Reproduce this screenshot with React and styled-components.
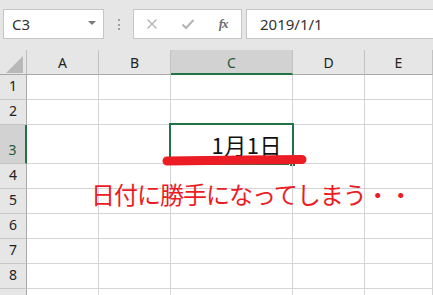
import React from 'react';
import styled, { createGlobalStyle } from 'styled-components';

const Global = createGlobalStyle`
  html, body { margin: 0; padding: 0; background: #fff; }
  body { font-family: "Noto Sans", "Noto Sans CJK JP", sans-serif; overflow: hidden; }
`;

const Page = styled.div`
  position: relative;
  width: 433px;
  height: 295px;
  overflow: hidden;
  background: #fff;
`;

const Toolbar = styled.div`
  height: 50px;
  box-sizing: border-box;
  background: #e6e6e6;
  display: flex;
  align-items: flex-start;
  padding: 9px 0 0 3px;
`;

const NameBox = styled.div`
  width: 101px;
  height: 30px;
  box-sizing: border-box;
  background: #fff;
  border: 1px solid #c6c6c6;
  display: flex;
  align-items: center;
  justify-content: space-between;
  padding: 0 7px 0 8px;
  font-size: 15px;
  color: #333;
`;

const Caret = styled.span`
  width: 0;
  height: 0;
  border-left: 4px solid transparent;
  border-right: 4px solid transparent;
  border-top: 4px solid #7a7a7a;
  margin-top: -2px;
`;

const Grip = styled.div`
  width: 2px;
  height: 11px;
  margin: 10px 13px 0 14px;
  display: flex;
  flex-direction: column;
  justify-content: space-between;
  & > i { display: block; width: 2px; height: 2px; background: #a0a0a0; }
`;

const FxBox = styled.div`
  width: 109px;
  height: 30px;
  box-sizing: border-box;
  background: #fff;
  border: 1px solid #c6c6c6;
  display: flex;
  align-items: center;
`;

const FxSlot = styled.div`
  width: 36px;
  height: 28px;
  display: flex;
  align-items: center;
  justify-content: center;
`;

const FxLabel = styled.span`
  font-family: "Liberation Serif", "DejaVu Serif", serif;
  font-style: italic;
  font-weight: bold;
  font-size: 13px;
  color: #6a6a6a;
  letter-spacing: -1px;
`;

const FormulaInput = styled.div`
  flex: 1;
  margin-left: 4px;
  height: 30px;
  box-sizing: border-box;
  background: #fff;
  border: 1px solid #c6c6c6;
  border-right: none;
  display: flex;
  align-items: center;
  padding-left: 13px;
  font-size: 15px;
  color: #333;
`;

const Sheet = styled.div`
  display: grid;
  grid-template-columns: 27px 72px 72px 122px 72px 1fr;
  grid-template-rows: 25px 25px 25px 39px 25px 25px 25px 25px 25px 25px;
  background: #fff;
`;

const Corner = styled.div`
  background: #e6e6e6;
  border-right: 1px solid #bcbcbc;
  border-bottom: 1px solid #a8a8a8;
  display: flex;
  align-items: flex-end;
  justify-content: flex-end;
  padding: 0 3px 1px 0;
`;

const ColHeader = styled.div`
  box-sizing: border-box;
  background: ${p => (p.$active ? '#d2d2d2' : '#e6e6e6')};
  border-right: 1px solid #c2c2c2;
  border-bottom: ${p => (p.$active ? '2px solid #217346' : '1px solid #a8a8a8')};
  display: flex;
  align-items: center;
  justify-content: center;
  font-size: 14px;
  color: ${p => (p.$active ? '#1d5a3a' : '#222')};
  padding-top: ${p => (p.$active ? '1px' : '0')};
`;

const RowHeader = styled.div`
  box-sizing: border-box;
  background: ${p => (p.$active ? '#d2d2d2' : '#e6e6e6')};
  border-right: ${p => (p.$active ? '2px solid #217346' : '1px solid #a8a8a8')};
  border-bottom: 1px solid #c6c6c6;
  display: flex;
  align-items: flex-end;
  justify-content: center;
  padding-bottom: 3px;
  line-height: 20px;
  font-size: 14px;
  color: ${p => (p.$active ? '#1d5a3a' : '#222')};
`;

const Cell = styled.div`
  position: relative;
  box-sizing: border-box;
  border-right: 1px solid #d4d4d4;
  border-bottom: 1px solid #d4d4d4;
  display: flex;
  align-items: flex-end;
  justify-content: flex-end;
  padding: 0 10px 6px 0;
`;

const Selection = styled.div`
  position: absolute;
  left: -2px;
  top: -2px;
  right: -2px;
  bottom: -2px;
  border: 2px solid #217346;
  pointer-events: none;
`;

const FillHandle = styled.div`
  position: absolute;
  right: -4px;
  bottom: -4px;
  width: 5px;
  height: 5px;
  background: #217346;
  border: 1px solid #fff;
`;

const DateValue = styled.span`
  font-family: "Noto Sans CJK JP", sans-serif;
  font-size: 22px;
  line-height: 26px;
  letter-spacing: 0.5px;
  color: #111;
`;

const Annotation = styled.div`
  position: absolute;
  left: 91px;
  top: 177px;
  font-family: "Noto Sans CJK JP", sans-serif;
  font-size: 24px;
  line-height: 34px;
  letter-spacing: -1px;
  color: #ec1c24;
  white-space: nowrap;
`;

const Scribble = styled.svg`
  position: absolute;
  left: 0;
  top: 0;
  pointer-events: none;
`;

const cols = ['A', 'B', 'C', 'D', 'E'];
const rows = [1, 2, 3, 4, 5, 6, 7, 8, 9];

export default function App() {
  return (
    <Page>
      <Global />
      <Toolbar>
        <NameBox>
          <span>C3</span>
          <Caret />
        </NameBox>
        <Grip><i /><i /><i /></Grip>
        <FxBox>
          <FxSlot>
            <svg width="12" height="12" viewBox="0 0 12 12">
              <path d="M1.5 1.5 L10.5 10.5 M10.5 1.5 L1.5 10.5" stroke="#b3b3b3" strokeWidth="1.4" fill="none" />
            </svg>
          </FxSlot>
          <FxSlot>
            <svg width="14" height="12" viewBox="0 0 14 12">
              <path d="M1.5 6.5 L5 10 L12.5 2" stroke="#b3b3b3" strokeWidth="2" fill="none" />
            </svg>
          </FxSlot>
          <FxSlot>
            <FxLabel>fx</FxLabel>
          </FxSlot>
        </FxBox>
        <FormulaInput>2019/1/1</FormulaInput>
      </Toolbar>
      <Sheet>
        <Corner>
          <svg width="17" height="17" viewBox="0 0 17 17">
            <path d="M17 0 L17 17 L0 17 Z" fill="#b8b8b8" />
          </svg>
        </Corner>
        {cols.map(c => (
          <ColHeader key={c} $active={c === 'C'}>{c}</ColHeader>
        ))}
        {rows.map(r => (
          <React.Fragment key={r}>
            <RowHeader $active={r === 3}>{r < 9 ? r : ''}</RowHeader>
            {cols.map(c => (
              <Cell key={c}>
                {r === 3 && c === 'C' && (
                  <>
                    <DateValue>1月1日</DateValue>
                    <Selection />
                    <FillHandle />
                  </>
                )}
              </Cell>
            ))}
          </React.Fragment>
        ))}
      </Sheet>
      <Scribble width="433" height="295" viewBox="0 0 433 295">
        <path d="M167 161 C 200 160.5, 260 160, 302 159.5" stroke="#ec1c24" strokeWidth="9" strokeLinecap="round" fill="none" />
      </Scribble>
      <Annotation>日付に勝手になってしまう・・</Annotation>
    </Page>
  );
}
